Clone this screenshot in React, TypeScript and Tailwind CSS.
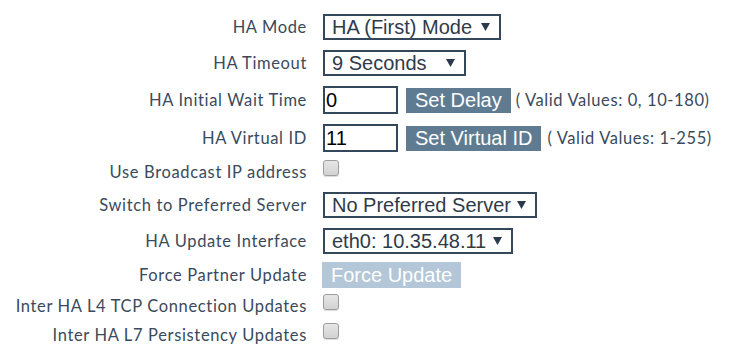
import React from "react";

const Arrow = () => (
  <svg width="9" height="8" viewBox="0 0 9 8" className="shrink-0">
    <polygon points="0,0 9,0 4.5,8" fill="#2c3b4c" />
  </svg>
);

function Select({ text, width }: { text: string; width: string }) {
  return (
    <div
      className={`${width} h-[26px] border-2 border-[#34475b] bg-white flex items-center justify-between pl-[7px] pr-[9px] text-[20px] leading-none text-[#2f3b48]`}
      style={{ fontFamily: '"Liberation Sans", Arial, sans-serif' }}
    >
      <span>{text}</span>
      <Arrow />
    </div>
  );
}

function Input({ value }: { value: string }) {
  return (
    <div
      className="w-[75px] h-[28px] border-2 border-[#34475b] bg-white flex items-center pl-[1px] text-[20px] leading-none text-black"
      style={{ fontFamily: '"Liberation Sans", Arial, sans-serif' }}
    >
      {value}
    </div>
  );
}

function Btn({ text, light }: { text: string; light?: boolean }) {
  return (
    <div
      className={`px-[9px] flex items-center text-[20px] leading-none text-white ${light ? "bg-[#b4c7d8] h-[26px]" : "bg-[#5f7b92] h-[25px]"}`}
      style={{ fontFamily: '"Liberation Sans", Arial, sans-serif' }}
    >
      {text}
    </div>
  );
}

const Check = () => (
  <div className="self-start -mt-[2px] w-[16px] h-[16px] rounded-[3px] border border-[#9d9d9d] bg-gradient-to-b from-[#e6e6e6] to-[#d2d2d2] shadow-[0_1px_1px_rgba(0,0,0,0.15)]" />
);

function Row({
  label,
  className,
  children,
}: {
  label: string;
  className: string;
  children: React.ReactNode;
}) {
  return (
    <div className={`flex items-center ${className}`}>
      <div className="w-[307px] text-right text-[16.5px] leading-[20px] tracking-[0.65px] text-[#3a4a5c] whitespace-nowrap">
        {label}
      </div>
      <div className="ml-[16px] flex items-center h-full">{children}</div>
    </div>
  );
}

export default function App() {
  return (
    <div
      className="w-[734px] h-[361px] bg-white flex flex-col pt-[14px]"
      style={{ fontFamily: "Lato, sans-serif" }}
    >
      <Row label="HA Mode" className="h-[26px]">
        <Select text="HA (First) Mode" width="w-[178px]" />
      </Row>
      <Row label="HA Timeout" className="h-[26px] mt-[10px]">
        <Select text="9 Seconds" width="w-[143px]" />
      </Row>
      <Row label="HA Initial Wait Time" className="h-[28px] mt-[10px]">
        <Input value="0" />
        <div className="ml-[8px]">
          <Btn text="Set Delay" />
        </div>
        <span className="ml-[5px] text-[16.5px] tracking-[0.6px] text-[#3a4a5c] whitespace-nowrap">( Valid Values: 0, 10-180)</span>
      </Row>
      <Row label="HA Virtual ID" className="h-[28px] mt-[10px]">
        <Input value="11" />
        <div className="ml-[8px]">
          <Btn text="Set Virtual ID" />
        </div>
        <span className="ml-[6px] text-[16.5px] tracking-[0.6px] text-[#3a4a5c] whitespace-nowrap">( Valid Values: 1-255)</span>
      </Row>
      <Row label="Use Broadcast IP address" className="h-[20px] mt-[10px]">
        <Check />
      </Row>
      <Row label="Switch to Preferred Server" className="h-[26px] mt-[10px]">
        <Select text="No Preferred Server" width="w-[214px]" />
      </Row>
      <Row label="HA Update Interface" className="h-[26px] mt-[10px]">
        <Select text="eth0: 10.35.48.11" width="w-[190px]" />
      </Row>
      <Row label="Force Partner Update" className="h-[26px] mt-[8px]">
        <div className="-ml-[1px]">
          <Btn text="Force Update" light />
        </div>
      </Row>
      <Row label="Inter HA L4 TCP Connection Updates" className="h-[20px] mt-[8px]">
        <Check />
      </Row>
      <Row label="Inter HA L7 Persistency Updates" className="h-[20px] mt-[9px]">
        <Check />
      </Row>
    </div>
  );
}
